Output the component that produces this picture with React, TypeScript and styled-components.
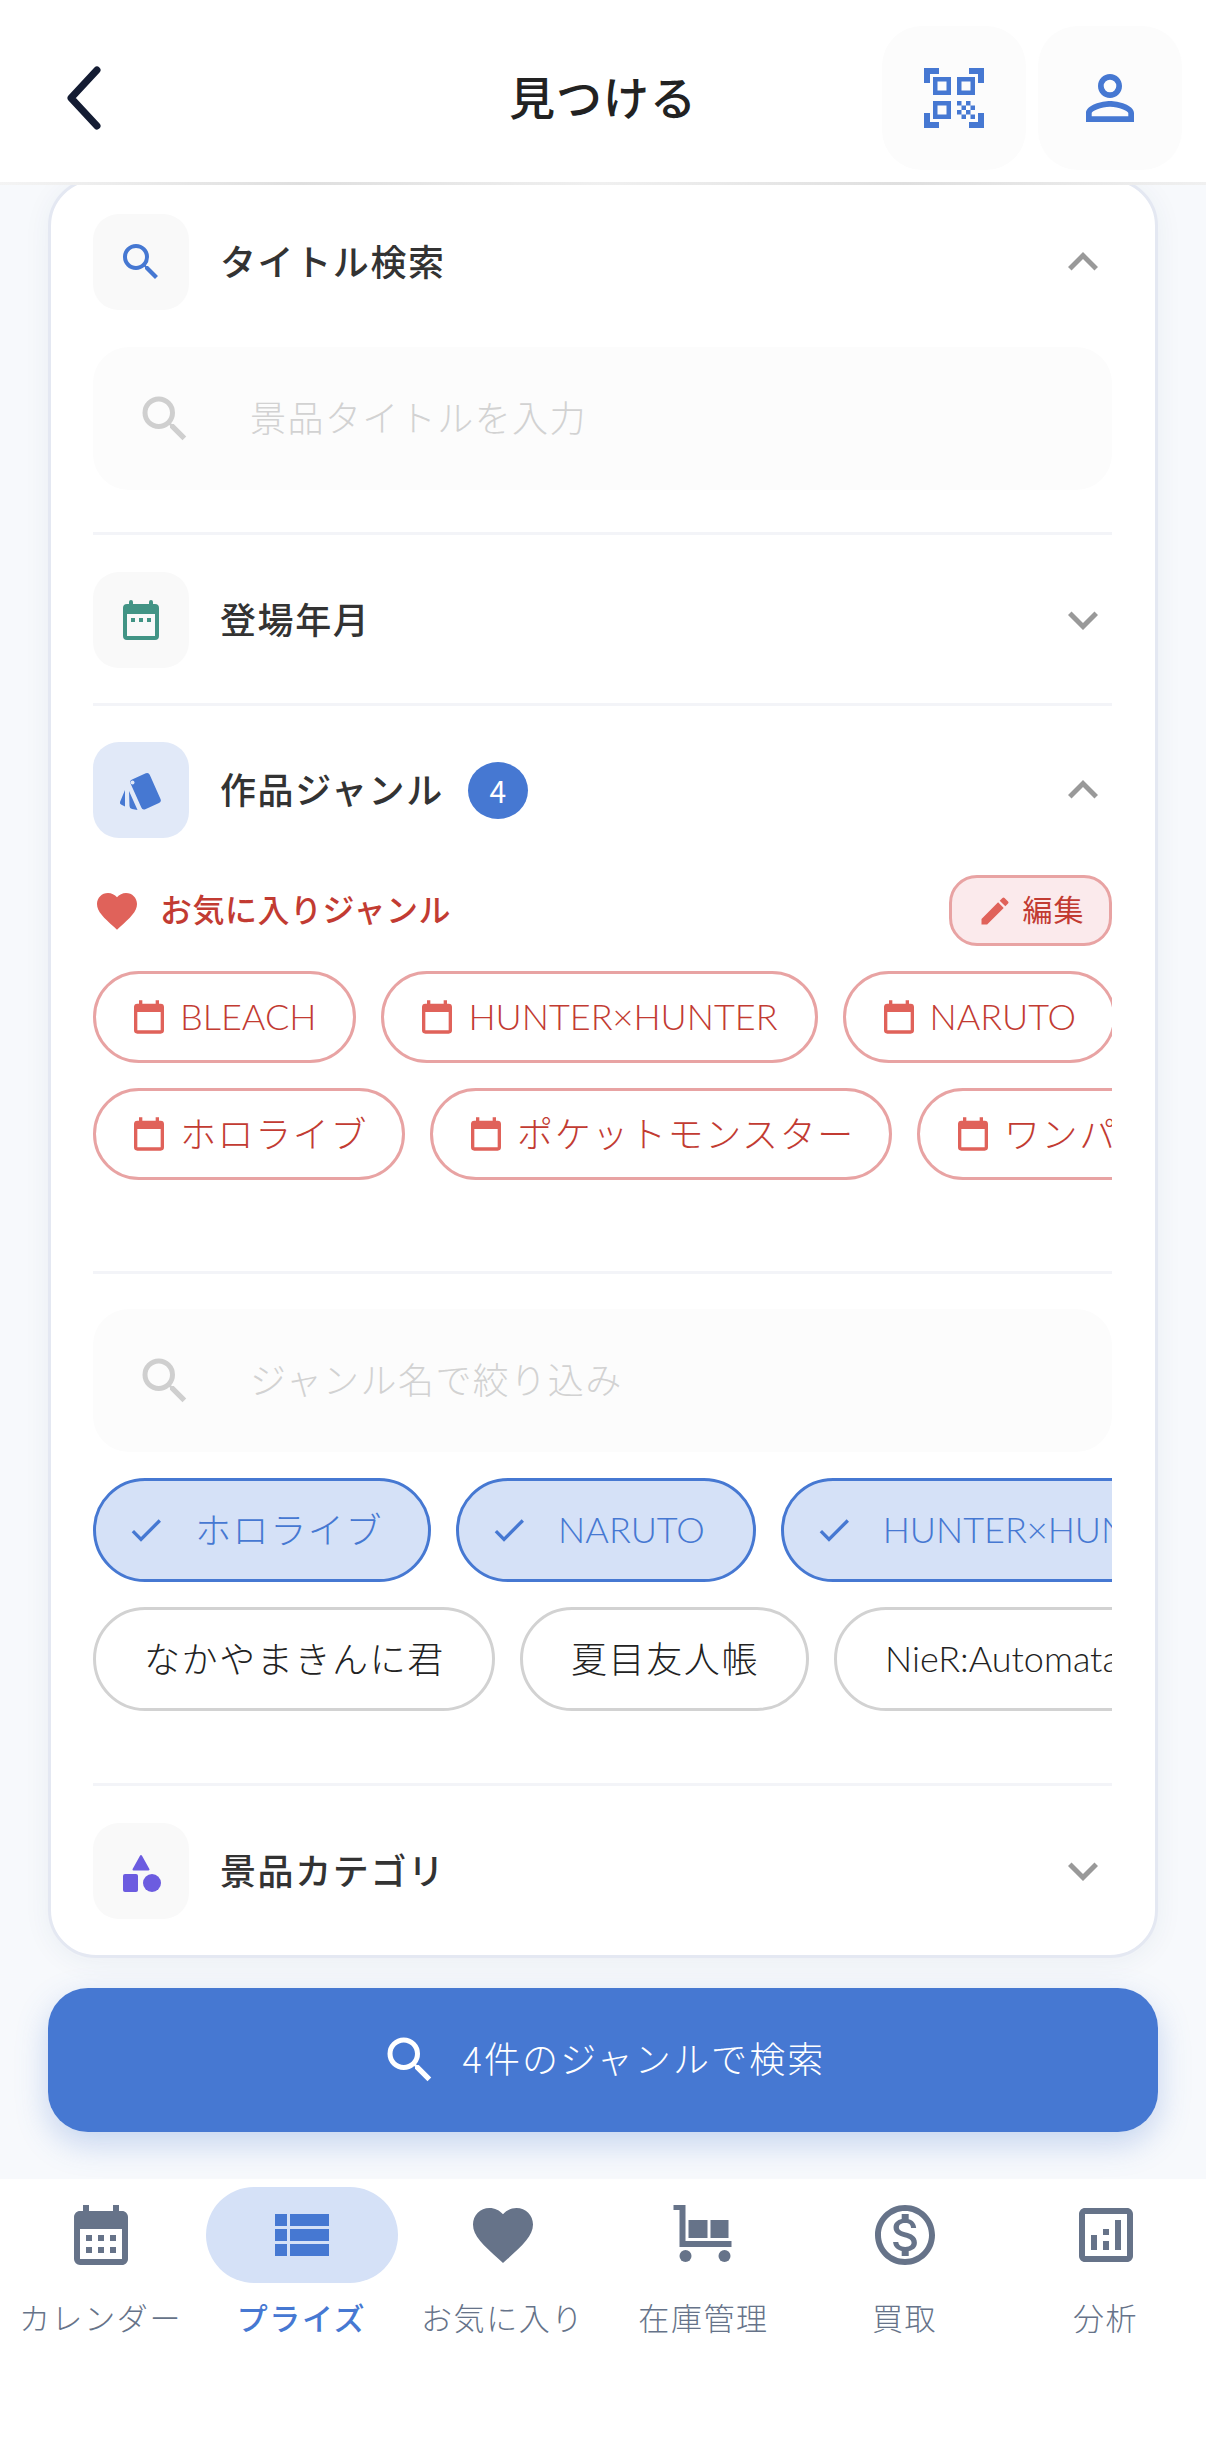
import React from "react";
import styled, { createGlobalStyle } from "styled-components";
import {
	MdQrCodeScanner,
	MdPersonOutline,
	MdSearch,
	MdExpandLess,
	MdExpandMore,
	MdFavorite,
	MdEdit,
	MdCheck,
	MdCalendarMonth,
	MdViewList,
	MdOutlineMonetizationOn,
	MdOutlineAnalytics,
} from "react-icons/md";

const BLUE = "#4678d2";
const RED = "#c23b32";
const RED_LIGHT = "#e0625a";
const SLATE = "#667389";

const GlobalStyle = createGlobalStyle`
	* { box-sizing: border-box; }
	html, body { margin: 0; padding: 0; background: #ffffff; }
	body {
		font-family: "Noto Sans CJK JP", "Noto Sans", sans-serif;
		letter-spacing: 0.05em;
	}
`;

const Page = styled.div`
	width: 1206px;
	height: 2450px;
	display: flex;
	flex-direction: column;
	background: #f7f9fc;
	overflow: hidden;
`;

const Header = styled.header`
	position: relative;
	z-index: 2;
	height: 185px;
	flex: none;
	display: grid;
	grid-template-columns: minmax(0, 1fr) auto minmax(0, 1fr);
	align-items: start;
	padding-top: 26px;
	background: #ffffff;
	border-bottom: 3px solid transparent;
	border-image: linear-gradient(90deg, #f4f4f4 0%, #dfdfdf 25%, #f0f0f0 50%, #dfdfdf 75%, #f0f0f0 100%) 1;
`;

const BackButton = styled.div`
	padding: 40px 0 0 64px;
	line-height: 0;
`;

const Title = styled.h1`
	margin: 35px 0 0;
	font-size: 46px;
	line-height: 68px;
	font-weight: 500;
	color: #222222;
	letter-spacing: 1px;
`;

const Actions = styled.div`
	display: flex;
	justify-content: flex-end;
	gap: 12px;
	padding-right: 24px;
`;

const ActionButton = styled.div`
	width: 144px;
	height: 144px;
	border-radius: 40px;
	background: #fcfcfc;
	color: ${BLUE};
	display: flex;
	align-items: center;
	justify-content: center;
	font-size: 72px;
`;

const Content = styled.main`
	flex: 1;
	display: flex;
	flex-direction: column;
	padding: 0 48px;
	min-height: 0;
`;

const Card = styled.section`
	margin-top: -7px;
	padding: 33px 43px 36px 42px;
	background: #ffffff;
	border: 3px solid #e4e8f2;
	border-radius: 48px;
	box-shadow: 0 4px 28px rgba(40, 60, 110, 0.06);
`;

const SectionRow = styled.div`
	display: flex;
	align-items: center;
	height: 96px;
`;

const IconBox = styled.div<{ $active?: boolean }>`
	width: 96px;
	height: 96px;
	flex: none;
	border-radius: 26px;
	background: ${({ $active }) => ($active ? "#e1e9f8" : "#f9f9f9")};
	display: flex;
	align-items: center;
	justify-content: center;
	font-size: 48px;
	color: ${BLUE};
`;

const SectionTitle = styled.span`
	margin-left: 31px;
	padding-bottom: 4px;
	font-size: 36px;
	font-weight: 500;
	letter-spacing: 1.6px;
	color: #333333;
`;

const CountBadge = styled.span`
	margin-left: 24px;
	width: 60px;
	height: 57px;
	border-radius: 50%;
	background: ${BLUE};
	color: #ffffff;
	font-size: 30px;
	letter-spacing: 0;
	display: flex;
	align-items: center;
	justify-content: center;
`;

const Chevron = styled.div`
	margin-left: auto;
	margin-right: -1px;
	font-size: 60px;
	line-height: 0;
	color: #999999;
`;

const Divider = styled.hr<{ $top: number; $bottom: number }>`
	margin: ${({ $top }) => $top}px 0 ${({ $bottom }) => $bottom}px;
	height: 3px;
	border: 0;
	background: #f3f4f8;
`;

const SearchField = styled.label<{ $top?: number }>`
	margin-top: ${({ $top }) => $top ?? 0}px;
	height: 143px;
	display: flex;
	align-items: center;
	gap: 55px;
	padding: 0 42px;
	border-radius: 36px;
	background: #fcfcfc;
	font-size: 60px;
	color: #cfcfcf;
`;

const SearchInput = styled.input`
	flex: 1;
	min-width: 0;
	border: 0;
	outline: 0;
	background: transparent;
	padding: 0 0 6px;
	font: inherit;
	font-size: 36px;
	font-weight: 300;
	letter-spacing: 0.04em;
	&::placeholder {
		color: #d2d2d2;
		opacity: 1;
	}
`;

const FavoriteHeader = styled.div`
	margin-top: 37px;
	height: 71px;
	display: flex;
	align-items: center;
`;

const FavoriteLabel = styled.span`
	margin-left: 19px;
	padding-bottom: 5px;
	font-size: 32px;
	font-weight: 500;
	color: ${RED};
	letter-spacing: 0.5px;
`;

const EditButton = styled.div`
	margin-left: auto;
	width: 163px;
	height: 71px;
	display: flex;
	align-items: center;
	justify-content: center;
	gap: 10px;
	border: 3px solid #e8a3a3;
	border-radius: 28px;
	background: #fbeaec;
	font-size: 30px;
	letter-spacing: 1px;
	color: ${RED};
	span {
		padding-bottom: 5px;
	}
	svg {
		color: ${RED_LIGHT};
		font-size: 36px;
	}
`;

const ChipArea = styled.div<{ $top: number; $gap: number }>`
	margin-top: ${({ $top }) => $top}px;
	display: flex;
	flex-direction: column;
	gap: ${({ $gap }) => $gap}px;
	overflow: hidden;
`;

const ChipRow = styled.div`
	display: flex;
	gap: 25px;
	white-space: nowrap;
`;

const ChipText = styled.span<{ $latin: boolean }>`
	padding: ${({ $latin }) => ($latin ? "0 3px 2px 0" : "0 0 4px")};
	font-family: ${({ $latin }) => ($latin ? '"Lato", "Noto Sans", sans-serif' : '"Noto Sans CJK JP", sans-serif')};
	font-weight: 300;
	letter-spacing: ${({ $latin }) => ($latin ? "0" : "0.045em")};
`;

const FavoriteChip = styled.div`
	flex: none;
	height: 92px;
	display: flex;
	align-items: center;
	gap: 11px;
	padding: 0 34px 0 33px;
	border: 3px solid #e8a3a3;
	border-radius: 46px;
	background: #ffffff;
	font-size: 36px;
	color: ${RED};
`;

const GenreChip = styled.div<{ $selected?: boolean }>`
	flex: none;
	height: 104px;
	display: flex;
	align-items: center;
	gap: 29px;
	padding: ${({ $selected }) => ($selected ? "0 45px 0 30px" : "0 47px 0 48px")};
	border: 3px solid ${({ $selected }) => ($selected ? BLUE : "#d2d2d2")};
	border-radius: 52px;
	background: ${({ $selected }) => ($selected ? "#d5e1f7" : "#ffffff")};
	font-size: 36px;
	color: ${({ $selected }) => ($selected ? BLUE : "#222222")};
	svg {
		font-size: 40px;
	}
`;

const SearchButton = styled.div`
	flex: none;
	margin-top: 30px;
	height: 144px;
	display: flex;
	align-items: center;
	justify-content: center;
	gap: 22px;
	border-radius: 40px;
	background: ${BLUE};
	box-shadow: 0 12px 32px rgba(70, 120, 210, 0.28);
	color: #ffffff;
	font-size: 36px;
	span {
		padding-bottom: 6px;
		font-weight: 300;
		letter-spacing: 0.06em;
	}
	svg {
		font-size: 60px;
	}
`;

const TabBar = styled.nav`
	position: relative;
	flex: none;
	height: 271px;
	display: grid;
	grid-template-columns: repeat(6, 1fr);
	align-items: start;
	padding-top: 8px;
	background: #ffffff;
`;

const Tab = styled.div<{ $active?: boolean }>`
	display: flex;
	flex-direction: column;
	align-items: center;
	color: ${({ $active }) => ($active ? BLUE : SLATE)};
	font-size: 31px;
	letter-spacing: 1.6px;
	font-weight: ${({ $active }) => ($active ? 500 : 300)};
`;

const TabIcon = styled.div<{ $active?: boolean }>`
	width: 192px;
	height: 96px;
	border-radius: 48px;
	background: ${({ $active }) => ($active ? "#d5e1f7" : "transparent")};
	display: flex;
	align-items: center;
	justify-content: center;
	font-size: 72px;
`;

const TabLabel = styled.span`
	margin-top: 12px;
	line-height: 44px;
`;

function BackIcon() {
	return (
		<svg width="40" height="64" viewBox="0 0 40 64" fill="none">
			<path d="M33 4 L7 32 L33 60" stroke="#141c33" strokeWidth="7" strokeLinecap="round" strokeLinejoin="round" />
		</svg>
	);
}

// section header calendar, solid top with a row of dots
function EventIcon() {
	return (
		<svg width="48" height="48" viewBox="0 0 24 24" fill="#429485">
			<path d="M19 4h-1V3a1 1 0 0 0-2 0v1H8V3a1 1 0 0 0-2 0v1H5a2 2 0 0 0-2 2v14a2 2 0 0 0 2 2h14a2 2 0 0 0 2-2V6a2 2 0 0 0-2-2zm0 16H5V9h14z" />
			<path d="M7 11h2v2H7zM11 11h2v2h-2zM15 11h2v2h-2z" />
		</svg>
	);
}

function ChipCalendarIcon() {
	return (
		<svg width="40" height="40" viewBox="0 0 24 24" fill={RED_LIGHT}>
			<path d="M19 4h-1V2h-2v2H8V2H6v2H5a2 2 0 0 0-2 2v14a2 2 0 0 0 2 2h14a2 2 0 0 0 2-2V6a2 2 0 0 0-2-2zm0 16H5V9h14z" />
		</svg>
	);
}

function SwatchIcon() {
	return (
		<svg width="48" height="48" viewBox="0 0 48 48" fill={BLUE}>
			<rect x="18" y="9" width="21" height="32.5" rx="3" transform="rotate(-24 28.5 25.2)" />
			<circle cx="15.5" cy="16.5" r="2" fill="#e1e9f8" />
			<path d="M8 24 L3 36 Q2.5 38 4.5 38.8 L8 40.5 Z" />
			<path d="M12 25 L20.5 44 L15 43 Q12.5 42.5 12.5 40 Z" />
		</svg>
	);
}

function ShapesIcon() {
	return (
		<svg width="48" height="48" viewBox="0 0 48 48" fill="#6c5ce0">
			<path d="M24 9 L31.5 22.5 L16.5 22.5 Z" stroke="#6c5ce0" strokeWidth="2" strokeLinejoin="round" />
			<rect x="6" y="27" width="15" height="18" rx="2" />
			<circle cx="35" cy="36" r="9" />
		</svg>
	);
}

function CartIcon() {
	return (
		<svg width="72" height="72" viewBox="0 0 72 72" fill={SLATE}>
			<path d="M5.5 6h12v36h46v6h-52V11h-6z" />
			<rect x="20.5" y="21" width="19" height="18" />
			<rect x="42.5" y="21" width="18" height="18" />
			<circle cx="17.5" cy="57" r="6" />
			<circle cx="56.5" cy="57" r="6" />
		</svg>
	);
}

const favoriteRows = [
	["BLEACH", "HUNTER×HUNTER", "NARUTO"],
	["ホロライブ", "ポケットモンスター", "ワンパンマン"],
];

const genreRows = [
	[
		{ label: "ホロライブ", selected: true },
		{ label: "NARUTO", selected: true },
		{ label: "HUNTER×HUNTER", selected: true },
	],
	[
		{ label: "なかやまきんに君", selected: false },
		{ label: "夏目友人帳", selected: false },
		{ label: "NieR:Automata", selected: false },
	],
];

const tabs = [
	{ label: "カレンダー", icon: <MdCalendarMonth /> },
	{ label: "プライズ", icon: <MdViewList />, active: true },
	{ label: "お気に入り", icon: <MdFavorite /> },
	{ label: "在庫管理", icon: <CartIcon /> },
	{ label: "買取", icon: <MdOutlineMonetizationOn /> },
	{ label: "分析", icon: <MdOutlineAnalytics /> },
];

const isLatin = (label: string) => /^[A-Za-z:×]+$/.test(label);

export default function App() {
	return (
		<Page>
			<GlobalStyle />
			<Header>
				<BackButton>
					<BackIcon />
				</BackButton>
				<Title>見つける</Title>
				<Actions>
					<ActionButton>
						<MdQrCodeScanner />
					</ActionButton>
					<ActionButton>
						<MdPersonOutline />
					</ActionButton>
				</Actions>
			</Header>

			<Content>
				<Card>
					<SectionRow>
						<IconBox>
							<MdSearch />
						</IconBox>
						<SectionTitle>タイトル検索</SectionTitle>
						<Chevron>
							<MdExpandLess />
						</Chevron>
					</SectionRow>
					<SearchField $top={37}>
						<MdSearch />
						<SearchInput placeholder="景品タイトルを入力" />
					</SearchField>
					<Divider $top={42} $bottom={37} />

					<SectionRow>
						<IconBox>
							<EventIcon />
						</IconBox>
						<SectionTitle>登場年月</SectionTitle>
						<Chevron>
							<MdExpandMore />
						</Chevron>
					</SectionRow>
					<Divider $top={35} $bottom={36} />

					<SectionRow>
						<IconBox $active>
							<SwatchIcon />
						</IconBox>
						<SectionTitle>作品ジャンル</SectionTitle>
						<CountBadge>4</CountBadge>
						<Chevron>
							<MdExpandLess />
						</Chevron>
					</SectionRow>

					<FavoriteHeader>
						<MdFavorite color={RED_LIGHT} size={48} />
						<FavoriteLabel>お気に入りジャンル</FavoriteLabel>
						<EditButton>
							<MdEdit />
							<span>編集</span>
						</EditButton>
					</FavoriteHeader>

					<ChipArea $top={25} $gap={25}>
						{favoriteRows.map((row, index) => (
							<ChipRow key={index}>
								{row.map((label) => (
									<FavoriteChip key={label}>
										<ChipCalendarIcon />
										<ChipText $latin={isLatin(label)}>{label}</ChipText>
									</FavoriteChip>
								))}
							</ChipRow>
						))}
					</ChipArea>
					<Divider $top={91} $bottom={35} />

					<SearchField>
						<MdSearch />
						<SearchInput placeholder="ジャンル名で絞り込み" />
					</SearchField>

					<ChipArea $top={26} $gap={25}>
						{genreRows.map((row, index) => (
							<ChipRow key={index}>
								{row.map((chip) => (
									<GenreChip key={chip.label} $selected={chip.selected}>
										{chip.selected && <MdCheck />}
										<ChipText $latin={isLatin(chip.label)}>{chip.label}</ChipText>
									</GenreChip>
								))}
							</ChipRow>
						))}
					</ChipArea>
					<Divider $top={72} $bottom={37} />

					<SectionRow>
						<IconBox>
							<ShapesIcon />
						</IconBox>
						<SectionTitle>景品カテゴリ</SectionTitle>
						<Chevron>
							<MdExpandMore />
						</Chevron>
					</SectionRow>
				</Card>

				<SearchButton>
					<MdSearch />
					<span>4件のジャンルで検索</span>
				</SearchButton>
			</Content>

			<TabBar>
				{tabs.map((tab) => (
					<Tab key={tab.label} $active={tab.active}>
						<TabIcon $active={tab.active}>{tab.icon}</TabIcon>
						<TabLabel>{tab.label}</TabLabel>
					</Tab>
				))}
			</TabBar>
		</Page>
	);
}
